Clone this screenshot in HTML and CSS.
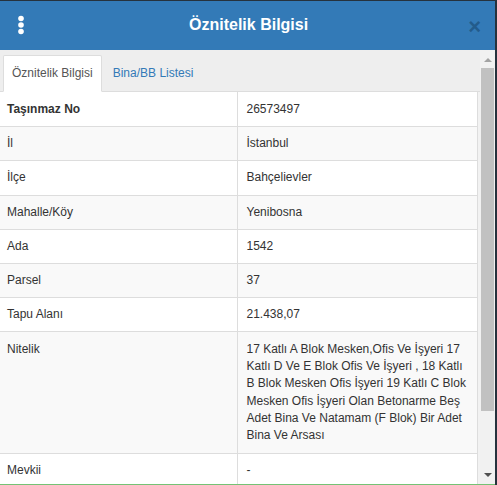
FILE: index.html
```html
<!DOCTYPE html>
<html lang="tr">
<head>
<meta charset="UTF-8">
<title>Öznitelik Bilgisi</title>
<link rel="stylesheet" href="styles.css">
</head>
<body>

<div class="modal">
  <!-- Başlık -->
  <div class="modal-header">
    <button class="menu-btn" title="Menü">
      <svg width="8" height="20" viewBox="0 0 8 20"><circle cx="4" cy="3.5" r="2.8" fill="#fff"/><circle cx="4" cy="10" r="2.8" fill="#fff"/><circle cx="4" cy="16.5" r="2.8" fill="#fff"/></svg>
    </button>
    <h4 class="modal-title">Öznitelik Bilgisi</h4>
    <button class="close">&times;</button>
  </div>

  <!-- Gövde -->
  <div class="modal-body">
    <div class="pane">
      <ul class="tabs">
        <li class="active"><a>Öznitelik Bilgisi</a></li>
        <li><a>Bina/BB Listesi</a></li>
      </ul>
      <table class="attr">
        <tr class="head"><th>Taşınmaz No</th><td>26573497</td></tr>
        <tr><td>İl</td><td>İstanbul</td></tr>
        <tr><td>İlçe</td><td>Bahçelievler</td></tr>
        <tr><td>Mahalle/Köy</td><td>Yenibosna</td></tr>
        <tr><td>Ada</td><td>1542</td></tr>
        <tr><td>Parsel</td><td>37</td></tr>
        <tr><td>Tapu Alanı</td><td>21.438,07</td></tr>
        <tr class="long"><td>Nitelik</td><td>17 Katlı A Blok Mesken,Ofis Ve İşyeri 17 Katlı D Ve E Blok Ofis Ve İşyeri , 18 Katlı B Blok Mesken Ofis İşyeri 19 Katlı C Blok Mesken Ofis İşyeri Olan Betonarme Beş Adet Bina Ve Natamam (F Blok) Bir Adet Bina Ve Arsası</td></tr>
        <tr><td>Mevkii</td><td>-</td></tr>
      </table>
    </div>
    <div class="scrollbar">
      <span class="arrow up"></span>
      <div class="track"><div class="thumb"></div></div>
      <span class="arrow down"></span>
    </div>
  </div>
</div>

</body>
</html>
```

FILE: styles.css
```css
*{margin:0;padding:0;box-sizing:border-box}
html,body{height:100%;overflow:hidden}
body{background:#26323d;font-family:'Liberation Sans',Arial,sans-serif;font-size:12px;line-height:1.42857;color:#333}

/* ---------------- Modal ---------------- */
.modal{width:495px;height:484px;margin-top:1px;display:flex;flex-direction:column;background:#fff;border-bottom:1px solid #74c274}

.modal-header{height:49px;flex:0 0 49px;display:flex;align-items:center;background:#337ab7;color:#fff;padding:0 14px 0 17px}
.menu-btn{background:none;border:none;width:8px;height:20px;display:flex;margin-top:-1px}
.modal-title{flex:1;text-align:center;font-size:16px;font-weight:700;padding-left:4px}
.close{background:none;border:none;font-family:'Liberation Sans',Arial,sans-serif;font-size:22px;font-weight:700;line-height:1;color:#235c8c;margin-top:2px}

.modal-body{flex:1;display:flex;min-height:0;background:#eee}
.pane{flex:1;overflow:hidden;background:#f2f2f2}

/* ---------------- Tabs ---------------- */
.tabs{list-style:none;display:flex;padding:5px 0 0 3px;border-bottom:1px solid #ddd;background:#eee}
.tabs li{margin-right:2px;margin-bottom:-1px}
.tabs a{display:block;padding:9px 8px;border:1px solid transparent;border-radius:2px 2px 0 0;color:#337ab7}
.tabs .active a{background:#fff;border-color:#ddd #ddd transparent;color:#555}

/* ---------------- Tabla ---------------- */
.attr{width:478px;border-collapse:collapse;background:#fff;border-right:1px solid #ddd}
.attr th,.attr td{padding:8px;text-align:left;vertical-align:top}
.attr th{font-weight:700}
.attr tr + tr > *{border-top:1px solid #ddd}
.attr tr > :first-child{width:237px;padding-left:7px}
.attr tr > :last-child{border-left:1px solid #ddd;padding-left:9px}
.attr tr:nth-child(even){background:#f9f9f9}
.attr .head > *{padding-top:9px}
.attr .long > *{padding-top:9px;padding-bottom:9px}

/* ---------------- Scrollbar ---------------- */
.scrollbar{width:15px;flex:0 0 15px;display:flex;flex-direction:column;background:#f1f1f1;padding:2px 0 2px}
.arrow{height:15px;flex:0 0 15px;display:flex;align-items:center;justify-content:center}
.arrow::before{content:"";border-left:4px solid transparent;border-right:4px solid transparent}
.arrow.up::before{border-bottom:4px solid #a3a3a3}
.arrow.down::before{border-top:4px solid #505050}
.track{flex:1;padding:1px 1px 0 1px}
.thumb{height:343px;background:#c1c1c1}
```
